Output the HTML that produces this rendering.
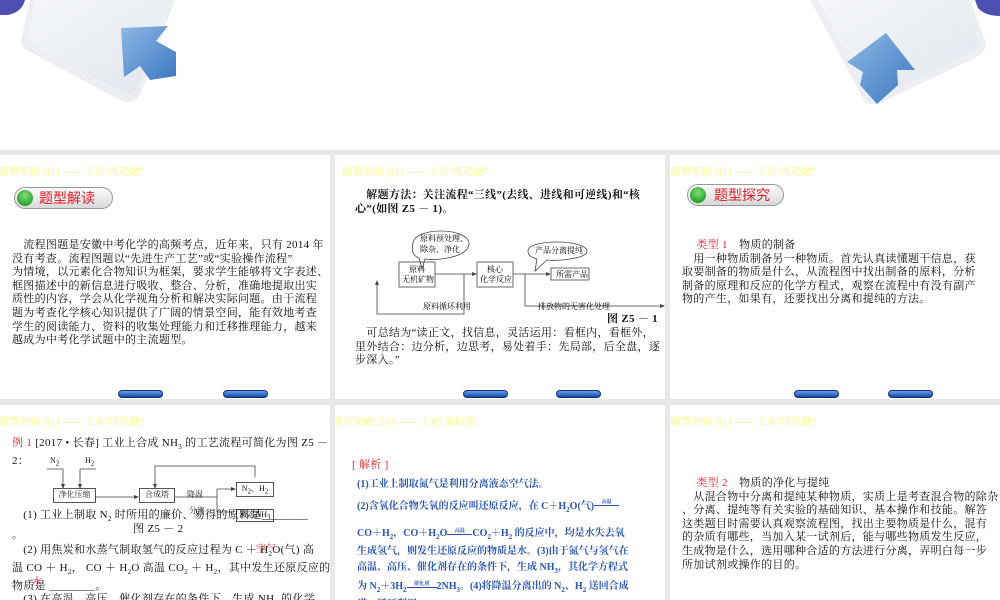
<!DOCTYPE html>
<html><head><meta charset="utf-8">
<style>
*{margin:0;padding:0;box-sizing:border-box}
body{width:1000px;height:600px;overflow:hidden;background:#e8e8e8;position:relative;font-family:"Liberation Serif","Noto Serif CJK SC","Noto Sans CJK SC",serif;color:#111}
.top{position:absolute;left:0;top:0;width:1000px;height:150px;background:#fff}
.s{position:absolute;background:#fff;overflow:hidden}
.hd{position:absolute;top:8px;font-size:10px;color:#fbf77a;white-space:nowrap;font-family:"Liberation Serif","Noto Serif CJK SC",serif}
.t{position:absolute;font-size:11px;line-height:13.6px;white-space:nowrap;letter-spacing:0.3px}
.pill{position:absolute;height:22px;border:1px solid #999;border-radius:11px;background:linear-gradient(#fdfdfd,#d8d8d8);color:#e0202a;font-size:14px;line-height:20px;padding-left:24px;font-family:"Noto Sans CJK SC",sans-serif}
.pill:before{content:"";position:absolute;left:2px;top:2px;width:16px;height:16px;border-radius:50%;background:radial-gradient(circle at 50% 35%,#7de07a,#0c8a10)}
.btn{position:absolute;width:45px;height:8px;border-radius:4px;background:linear-gradient(#6aa0e8,#1748a8);border:1px solid #0d2f80}
.red{color:#e0202a}
.blue{color:#2a55b0;font-weight:bold;font-size:10px;position:absolute;white-space:nowrap}
.box{position:absolute;border:1px solid #555;font-size:8px;text-align:center;line-height:11px;background:#fff;letter-spacing:0}
.lbl{position:absolute;font-size:8px;white-space:nowrap}
sub{font-size:7px}
</style></head><body>
<div class="top">
<svg width="1000" height="150" style="position:absolute;left:0;top:0">
<defs>
<linearGradient id="g1" x1="0" y1="0" x2="1" y2="1"><stop offset="0" stop-color="#f4f6f9"/><stop offset="1" stop-color="#e2e6ec"/></linearGradient>
<linearGradient id="ab" x1="0" y1="0" x2="1" y2="1"><stop offset="0" stop-color="#8fb8e6"/><stop offset="1" stop-color="#3c78c0"/></linearGradient>
</defs>
<path d="M0 0 H25 Q22 12 8 15 L0 15Z" fill="#4d50b0"/>
<path d="M30 0 L175 0 L140 95 Q133 106 120 100 L30 52 Q18 46 22 35 Z" fill="#eceef2"/>
<path d="M35 0 L170 0 L138 88 Q132 97 122 92 L35 46 Q26 40 29 32 Z" fill="url(#g1)"/>
<path d="M121 28 L168 26 L156 41 L176 52 L176 76 L150 80 L140 66 L124 77 Z" fill="url(#ab)"/>
<path d="M975 0 H1000 V16 Q985 16 978 8Z" fill="#4d50b0"/>
<path d="M810 0 L970 0 L985 40 Q988 52 975 58 L880 103 Q868 108 862 96 Z" fill="#eceef2"/>
<path d="M818 0 L965 0 L978 38 Q980 48 970 52 L882 95 Q872 99 868 90 Z" fill="url(#g1)"/>
<path d="M886 33 L915 70 L897 70 L898 85 L877 104 L860 85 L863 72 L847 62 Z" fill="url(#ab)"/>
</svg>
</div>

<!-- slide 1 -->
<div class="s" style="left:0;top:155px;width:330px;height:244px">
<div class="hd" style="left:-2px">题型突破(五) ‖ —— 工业“流程题”</div>
<div class="pill" style="left:14px;top:32px;width:99px">题型解读</div>
<div class="t" style="left:12px;top:84px">　流程图题是安徽中考化学的高频考点，近年来，只有 2014 年<br>没有考查。流程图题以“先进生产工艺”或“实验操作流程”<br>为情境，以元素化合物知识为框架，要求学生能够将文字表述、<br>框图描述中的新信息进行吸收、整合、分析，准确地提取出实<br>质性的内容，学会从化学视角分析和解决实际问题。由于流程<br>题为考查化学核心知识提供了广阔的情景空间，能有效地考查<br>学生的阅读能力、资料的收集处理能力和迁移推理能力，越来<br>越成为中考化学试题中的主流题型。</div>
<div class="btn" style="left:118px;top:235px"></div><div class="btn" style="left:223px;top:235px"></div>
</div>

<!-- slide 2 -->
<div class="s" style="left:335px;top:155px;width:330px;height:244px">
<div class="hd" style="left:7px">题型突破(五) ‖ —— 工业“流程题”</div>
<div class="t" style="left:20px;top:34px;font-weight:bold">　解题方法：关注流程“三线”(去线、进线和可逆线)和“核<br>心”(如图 Z5 － 1)。</div>
<svg width="330" height="100" style="position:absolute;left:0;top:70px" font-size="8" font-family="Noto Serif CJK SC,serif">
<g fill="none" stroke="#444" stroke-width="0.8">
<path d="M78 18 C80 2 132 2 134 18 C134 33 100 36 90 34 L87 44 L84 33 C76 30 77 24 78 18Z"/>
<path d="M193 26 C193 14 250 14 252 26 C252 34 222 36 212 35 L200 46 L202 34 C194 32 193 29 193 26Z"/>
<rect x="64" y="37" width="36" height="25"/><rect x="142" y="37" width="36" height="25"/><rect x="216" y="43" width="38" height="12"/>
<path d="M100 49 H140 M178 49 H214"/>
<path d="M42 59 V89 H129 V49 M190 49 V81 H327"/>
</g>
<g fill="#444"><path d="M142 49 l-5 -2 v4z M216 49 l-5 -2 v4z M42 55 l-2 5 h4z M330 81 l-5 -2 v4z"/></g>
<text x="85" y="16">原料预处理、</text><text x="85" y="27">除杂、净化</text>
<text x="200" y="28">产品分离提纯</text>
<text x="74" y="47">原料</text><text x="67" y="57">无机矿物</text>
<text x="152" y="47">核心</text><text x="145" y="57">化学反应</text>
<text x="221" y="52">所需产品</text>
<text x="88" y="84">原料循环利用</text><text x="203" y="84">排放物的无害化处理</text>
</svg>
<div class="t" style="left:272px;top:158px;font-weight:bold">图 Z5 － 1</div>
<div class="t" style="left:20px;top:172px">　可总结为“读正文，找信息，灵活运用：看框内，看框外，<br>里外结合：边分析，边思考，易处着手：先局部，后全盘，逐<br>步深入。”</div>
<div class="btn" style="left:128px;top:235px"></div><div class="btn" style="left:221px;top:235px"></div>
</div>

<!-- slide 3 -->
<div class="s" style="left:670px;top:155px;width:330px;height:244px">
<div class="hd" style="left:0px">题型突破(五) ‖ —— 工业“流程题”</div>
<div class="pill" style="left:17px;top:29px;width:97px;padding-left:26px">题型探究</div>
<div class="t" style="left:12px;top:84px">　 <span class="red">类型 1</span>　物质的制备<br>　用一种物质制备另一种物质。首先认真读懂题干信息，获<br>取要制备的物质是什么，从流程图中找出制备的原料，分析<br>制备的原理和反应的化学方程式，观察在流程中有没有副产<br>物的产生，如果有，还要找出分离和提纯的方法。</div>
<div class="btn" style="left:124px;top:235px"></div><div class="btn" style="left:218px;top:235px"></div>
</div>

<!-- slide 4 -->
<div class="s" style="left:0;top:405px;width:330px;height:195px">
<div class="hd" style="left:-2px">题型突破(五) ‖ —— 工业“流程题”</div>
<div class="t" style="left:12px;top:32px"><span class="red">例 1</span> [2017 • 长春] 工业上合成 NH<sub>3</sub> 的工艺流程可简化为图 Z5 －<br>2：</div>
<div class="lbl" style="left:50px;top:51px">N<sub>2</sub></div><div class="lbl" style="left:85px;top:51px">H<sub>2</sub></div>
<svg width="330" height="80" style="position:absolute;left:0;top:55px"><g stroke="#444" fill="none" stroke-width="0.8">
<path d="M47 9 H63 V28 M80 9 H96 M80 9 V28 M96 37 H137 M175 37 H217 V29 H234 M217 37 V52 H234 M155 28 V6 H255 V17"/></g>
<g fill="#444"><path d="M63 29 l-2 -5 h4z M80 29 l-2 -5 h4z M139 37 l-5 -2 v4z M236 29 l-5 -2 v4z M155 29 l-2 -5 h4z"/></g></svg>
<div class="box" style="left:53px;top:83px;width:43px;height:15px">净化压缩</div>
<div class="box" style="left:139px;top:83px;width:36px;height:15px">合成塔</div>
<div class="lbl" style="left:187px;top:84px">降温</div><div class="lbl" style="left:189px;top:100px">分离</div>
<div class="box" style="left:236px;top:77px;width:38px;height:15px">N<sub>2</sub>、H<sub>2</sub></div>
<div class="box" style="left:236px;top:104px;width:38px;height:13px;line-height:10px">液态NH<sub>3</sub></div>
<div class="t" style="left:12px;top:104px">　(1) 工业上制取 N<sub>2</sub> 时所用的廉价、易得的原料是________</div>
<div class="t" style="left:133px;top:118px">图 Z5 － 2</div>
<div class="t" style="left:12px;top:124px">。</div>
<div class="t" style="left:12px;top:139px">　(2) 用焦炭和水蒸气制取氢气的反应过程为 C ＋ H<sub>2</sub>O(气) 高<br>温 CO ＋ H<sub>2</sub>， CO ＋ H<sub>2</sub>O 高温 CO<sub>2</sub> ＋ H<sub>2</sub>，其中发生还原反应的<br>物质是 ________。<br>　(3) 在高温、高压、催化剂存在的条件下，生成 NH<sub>3</sub> 的化学</div>
<div class="lbl red" style="left:256px;top:135px;font-size:10px">空气</div>
<div class="lbl red" style="left:32px;top:168px;font-size:10px">水</div>
</div>

<!-- slide 5 -->
<div class="s" style="left:335px;top:405px;width:330px;height:195px">
<div class="hd" style="left:-2px">题型突破(五) ‖ —— 工业“流程题”</div>
<div class="t red" style="left:17px;top:54px">[ 解析 ]</div>
<div class="blue" style="left:22px;top:70px">(1)工业上制取氮气是利用分离液态空气法。</div>
<div class="blue" style="left:22px;top:92px">(2)含氧化合物失氧的反应叫还原反应，在 C＋H<sub>2</sub>O(气)<span style="display:inline-block;width:25px;border-bottom:1px solid #2a55b0;font-size:5px;text-align:center;vertical-align:6px">高温</span></div>
<div class="blue" style="left:22px;top:119px">CO＋H<sub>2</sub>，CO＋H<sub>2</sub>O<span style="display:inline-block;width:25px;border-bottom:1px solid #2a55b0;font-size:5px;text-align:center;vertical-align:4px">高温</span>CO<sub>2</sub>＋H<sub>2</sub> 的反应中，均是水失去氧</div>
<div class="blue" style="left:22px;top:137px">生成氢气，则发生还原反应的物质是水。(3)由于氮气与氢气在</div>
<div class="blue" style="left:22px;top:153px">高温、高压、催化剂存在的条件下，生成 NH<sub>3</sub>，其化学方程式</div>
<div class="blue" style="left:22px;top:172px">为 N<sub>2</sub>＋3H<sub>2</sub><span style="display:inline-block;width:30px;border-bottom:1px solid #2a55b0;font-size:5px;text-align:center;vertical-align:4px">催化剂</span>2NH<sub>3</sub>。(4)将降温分离出的 N<sub>2</sub>、H<sub>2</sub> 送回合成</div>
<div class="blue" style="left:22px;top:190px">塔，循环利用……</div>
</div>

<!-- slide 6 -->
<div class="s" style="left:670px;top:405px;width:330px;height:195px">
<div class="hd" style="left:0px">题型突破(五) ‖ —— 工业“流程题”</div>
<div class="t" style="left:12px;top:72px">　 <span class="red">类型 2</span>　物质的净化与提纯<br>　从混合物中分离和提纯某种物质，实质上是考查混合物的除杂<br>、分离、提纯等有关实验的基础知识、基本操作和技能。解答<br>这类题目时需要认真观察流程图，找出主要物质是什么，混有<br>的杂质有哪些，当加入某一试剂后，能与哪些物质发生反应，<br>生成物是什么，选用哪种合适的方法进行分离，弄明白每一步<br>所加试剂或操作的目的。</div>
</div>
</body></html>
